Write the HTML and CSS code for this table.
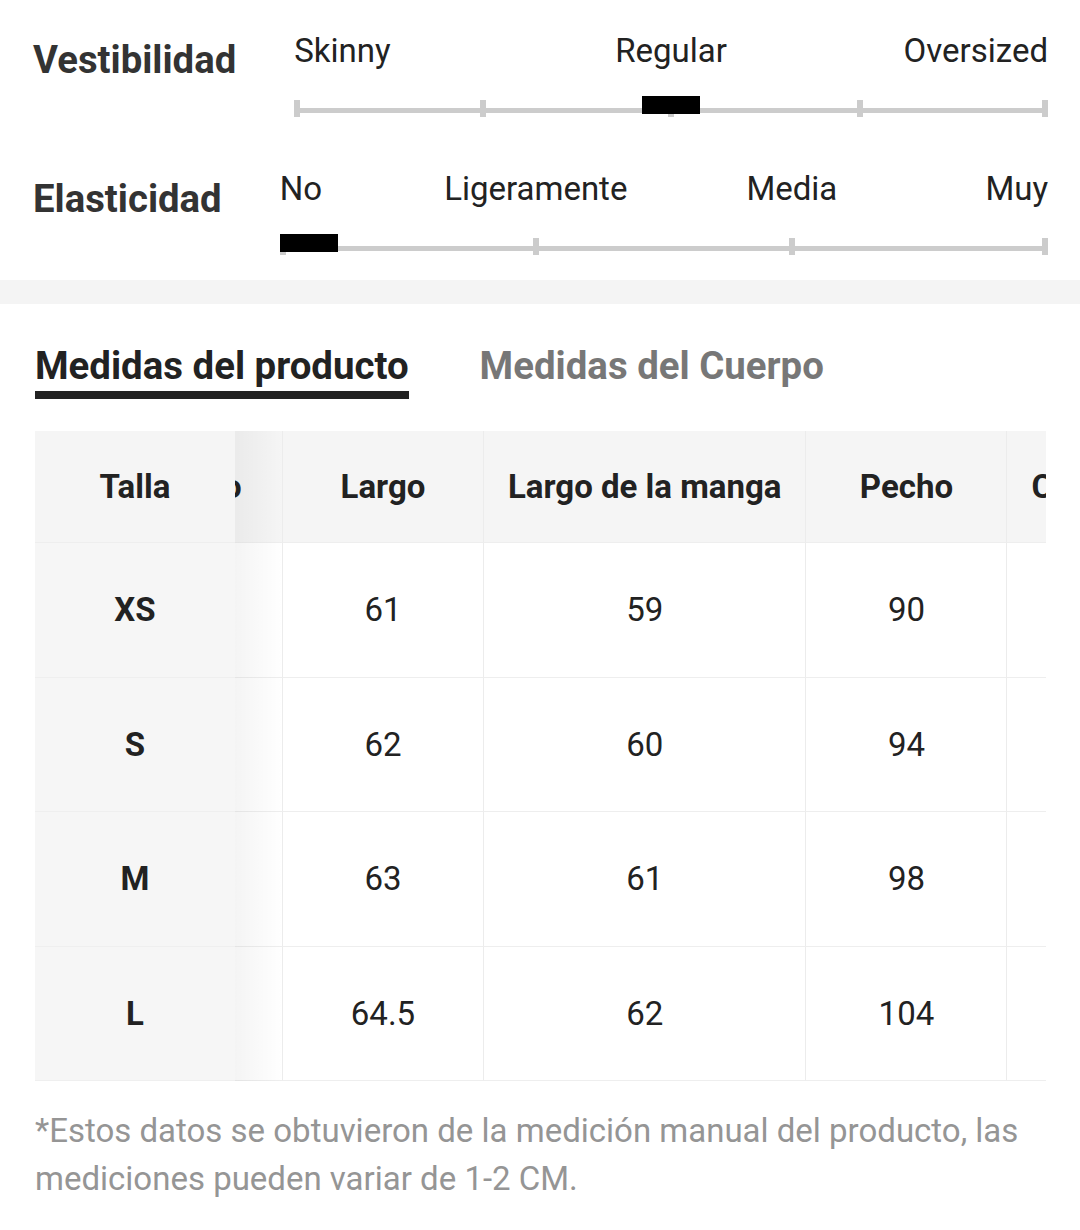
FILE: index.html
```html
<!DOCTYPE html>
<html lang="es">
<head>
<meta charset="utf-8">
<title>Medidas</title>
<link rel="stylesheet" href="styles.css">
</head>
<body>
<section class="fit">
  <div class="attr attr-first">
    <div class="attr-name">Vestibilidad</div>
    <div class="scale">
      <div class="labels cols-4">
        <span class="lbl at-start">Skinny</span>
        <span class="lbl at-2">Regular</span>
        <span class="lbl at-end">Oversized</span>
      </div>
      <div class="track cols-8">
        <i class="tick at-start"></i>
        <i class="tick at-2"></i>
        <i class="tick at-4"></i>
        <i class="tick at-6"></i>
        <i class="tick at-end"></i>
        <b class="thumb at-4"></b>
      </div>
    </div>
  </div>
  <div class="attr attr-second">
    <div class="attr-name">Elasticidad</div>
    <div class="scale">
      <div class="labels cols-6">
        <span class="lbl at-start">No</span>
        <span class="lbl at-2">Ligeramente</span>
        <span class="lbl at-4">Media</span>
        <span class="lbl at-end">Muy</span>
      </div>
      <div class="track cols-6">
        <i class="tick at-start"></i>
        <i class="tick at-2"></i>
        <i class="tick at-4"></i>
        <i class="tick at-end"></i>
        <b class="thumb at-start"></b>
      </div>
    </div>
  </div>
</section>

<div class="band"></div>

<section class="measures">
  <div class="tabs">
    <div class="tab tab-active">Medidas del producto</div>
    <div class="tab">Medidas del Cuerpo</div>
  </div>

  <div class="chart">
    <div class="fixed">
      <div class="fcell fhead">Talla</div>
      <div class="fcell">XS</div>
      <div class="fcell">S</div>
      <div class="fcell">M</div>
      <div class="fcell">L</div>
    </div>
    <div class="scroller">
      <table class="grid">
        <thead>
          <tr><th>Hombro</th><th>Largo</th><th>Largo de la manga</th><th>Pecho</th><th>Contorno de cintura</th></tr>
        </thead>
        <tbody>
          <tr><td>38</td><td>61</td><td>59</td><td>90</td><td>84</td></tr>
          <tr><td>39</td><td>62</td><td>60</td><td>94</td><td>88</td></tr>
          <tr><td>40</td><td>63</td><td>61</td><td>98</td><td>92</td></tr>
          <tr><td>41.5</td><td>64.5</td><td>62</td><td>104</td><td>98</td></tr>
        </tbody>
      </table>
    </div>
  </div>

  <p class="note">*Estos datos se obtuvieron de la medición manual del producto, las mediciones pueden variar de 1-2 CM.</p>
</section>
</body>
</html>
```

FILE: styles.css
```css
* { box-sizing: border-box; }

html, body {
  margin: 0;
  padding: 0;
  background: #ffffff;
}

body {
  width: 1080px;
  font-family: Roboto, "Noto Sans", "Liberation Sans", sans-serif;
  color: #222222;
}

/* ---------- fit attributes ---------- */
.fit {
  padding: 31px 32px 25px 33px;
}

.attr {
  display: flex;
  align-items: flex-start;
  gap: 58px;
}

.attr-second {
  margin-top: 52px;
}

.attr-name {
  font-size: 38.3px;
  line-height: 46px;
  font-weight: 700;
  color: #333333;
  white-space: nowrap;
  margin-top: 6px;
}

.attr-second .attr-name {
  margin-top: 7px;
}

.scale {
  flex: 1;
  min-width: 0;
}

.labels,
.track {
  display: grid;
  grid-template-rows: auto;
}

.cols-4 { grid-template-columns: repeat(4, minmax(0, 1fr)); }
.cols-6 { grid-template-columns: repeat(6, minmax(0, 1fr)); }
.cols-8 { grid-template-columns: repeat(8, minmax(0, 1fr)); }

.labels > *,
.track > * {
  grid-row: 1;
}

.at-start { grid-column: 1 / 2; justify-self: start; }
.at-2 { grid-column: 2 / 4; justify-self: center; }
.at-4 { grid-column: 4 / 6; justify-self: center; }
.at-6 { grid-column: 6 / 8; justify-self: center; }
.at-end { grid-column: -2 / -1; justify-self: end; }

.lbl {
  font-size: 33px;
  line-height: 40px;
  color: #222222;
  white-space: nowrap;
}

.track {
  height: 21px;
  margin-top: 25px;
  background: linear-gradient(#cccccc, #cccccc) no-repeat 0 12px / 100% 5px;
}

.tick {
  display: block;
  width: 6px;
  height: 17px;
  align-self: end;
  background: #cccccc;
}

.thumb {
  display: block;
  width: 58px;
  height: 18px;
  align-self: start;
  background: #000000;
}

/* ---------- band ---------- */
.band {
  height: 24px;
  background: #f4f4f4;
}

/* ---------- measures ---------- */
.measures {
  padding: 39px 34px 40px 35px;
}

.tabs {
  display: flex;
  align-items: flex-start;
  gap: 71px;
}

.tab {
  font-size: 38.4px;
  line-height: 46px;
  font-weight: 700;
  color: #777777;
  white-space: nowrap;
}

.tab-active {
  color: #222222;
  padding-bottom: 2px;
  border-bottom: 8px solid #222222;
}

.chart {
  display: flex;
  margin-top: 32px;
}

.fixed {
  position: relative;
  z-index: 1;
  flex: 0 0 200px;
  background: #f6f6f6;
}

.fixed::after {
  content: "";
  position: absolute;
  top: 0;
  bottom: 0;
  left: 100%;
  width: 48px;
  background: linear-gradient(to right, rgba(0, 0, 0, 0.045), rgba(0, 0, 0, 0));
}

.fcell {
  height: 134.5px;
  display: flex;
  align-items: center;
  justify-content: center;
  font-size: 33px;
  font-weight: 700;
  color: #222222;
  border-bottom: 1px solid #efefef;
}

.fcell.fhead {
  height: 112px;
  background: #f5f5f5;
  border-bottom: 1px solid #eeeeee;
}

.scroller {
  flex: 1;
  min-width: 0;
  overflow: hidden;
}

.grid {
  width: max-content;
  margin-left: -153px;
  border-collapse: separate;
  border-spacing: 0;
}

.grid th,
.grid td {
  box-sizing: border-box;
  width: 201px;
  padding: 0 24px;
  text-align: center;
  white-space: nowrap;
  font-size: 33px;
  color: #222222;
  border-right: 1px solid #ececec;
}

.grid th {
  height: 112px;
  font-weight: 700;
  background: #f5f5f5;
  border-bottom: 1px solid #eeeeee;
}

.grid td {
  height: 134.5px;
  font-weight: 400;
  border-bottom: 1px solid #eeeeee;
}

.note {
  margin: 26px 0 0 0;
  font-size: 33px;
  line-height: 48px;
  color: #959595;
}
```
